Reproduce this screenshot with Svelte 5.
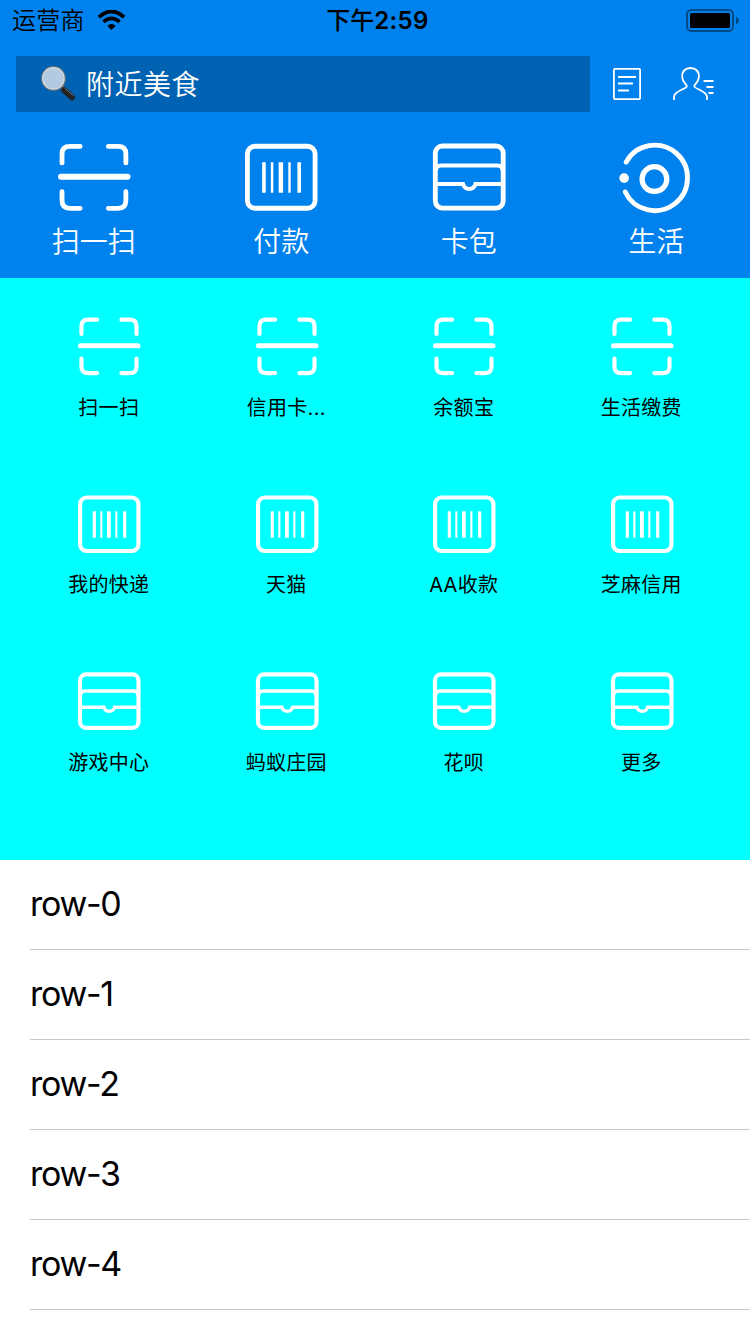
<script>
  const tabs = [
    { icon: 'scan', label: '扫一扫' },
    { icon: 'pay', label: '付款' },
    { icon: 'card', label: '卡包' },
    { icon: 'life', label: '生活' }
  ];
  const apps = [
    { icon: 'scan', labels: ['扫一扫', '信用卡还款', '余额宝', '生活缴费'] },
    { icon: 'pay', labels: ['我的快递', '天猫', 'AA收款', '芝麻信用'] },
    { icon: 'card', labels: ['游戏中心', '蚂蚁庄园', '花呗', '更多'] }
  ];
  const short = (s) => (s.length > 4 ? s.slice(0, 3) + '...' : s);
  const rows = [0, 1, 2, 3, 4];
</script>

{#snippet glyph(name)}
  <svg class="glyph" viewBox="0 0 72 72" fill="none" stroke="#fff" stroke-width="4.8" stroke-linecap="round">
    {#if name === 'scan'}
      <path d="M4 21.8V12.8Q4 5.4 11.8 5.4H22M50 5.4H59.8Q67.4 5.4 67.4 12.8V21.8M4 50.3V59.2Q4 66.9 11.8 66.9H22M50 66.9H59.8Q67.4 66.9 67.4 59.2V50.3" />
      <path d="M3 35.4H69" stroke-width="6" />
    {:else if name === 'pay'}
      <rect x="2.4" y="5.2" width="67.2" height="61.6" rx="7.5" />
      <path d="M17 21h3.6v30.5h-3.6zM25.7 21h2.4v30.5h-2.4zM33.4 21h4.4v30.5h-4.4zM43 21h2.4v30.5H43zM52 21h3.6v30.5h-3.6z" fill="#fff" stroke="none" />
    {:else if name === 'card'}
      <rect x="2.3" y="5" width="67.4" height="61.6" rx="7" />
      <path d="M3 29.4Q3 24.3 8 24.3H64Q69 24.3 69 29.4M3 42.8H29.8C31.5 49.2 40.5 49.2 42.2 42.8H69" stroke-width="4" stroke-linecap="butt" />
    {:else}
      <path d="M6.1 20.9A32.5 32.5 0 1 1 5.2 50.6" />
      <circle cx="34.2" cy="37.8" r="12.3" stroke-width="5.2" />
      <circle cx="4.1" cy="36.8" r="4.8" fill="#fff" stroke="none" />
    {/if}
  </svg>
{/snippet}

<main>
  <header>
    <div class="status">
      <div class="carrier">
        <span>运营商</span>
        <svg width="30" height="22" viewBox="0 0 30 22">
          <path d="M1.8 7.5Q15-4.5 28.2 7.5" fill="none" stroke="#000" stroke-width="4" />
          <path d="M6.5 12.3Q15 5.2 23.5 12.3" fill="none" stroke="#000" stroke-width="3.8" />
          <path d="M10.6 16.6Q15 12.8 19.4 16.6L15 21Z" />
        </svg>
      </div>
      <time><span>下午</span>2:59</time>
      <svg class="battery" width="53" height="24" viewBox="0 0 53 24">
        <rect x="1" y="1" width="46" height="21" rx="4.5" fill="none" stroke="#004a88" stroke-width="2" />
        <rect x="4" y="4" width="40" height="15" rx="1.5" />
        <path d="M50 7.5Q53 9 53 11.5T50 15.5Z" fill="#004a88" />
      </svg>
    </div>
    <div class="tools">
      <div class="search">
        <svg width="38" height="38" viewBox="0 0 38 38">
          <path d="M21 22L26 27" stroke="#858c91" stroke-width="4" />
          <path d="M24 26L32 33.2" stroke="#222" stroke-width="6" stroke-linecap="round" />
          <path d="M25 24.5L33 31.5" stroke="#777" stroke-width="1" stroke-linecap="round" />
          <circle cx="13.4" cy="14.4" r="11.6" fill="#b3cbe2" stroke="#68747c" stroke-width="1.6" />
          <circle cx="13.4" cy="14.4" r="10.8" fill="none" stroke="#d4dbdd" stroke-width="1.1" />
        </svg>
        <span>附近美食</span>
      </div>
      <svg class="bill" width="28" height="34" viewBox="0 0 28 34" fill="none" stroke="#fff" stroke-width="1.8">
        <rect x=".9" y="1.9" width="26.2" height="30.2" rx="1" />
        <path d="M5 10H23M5 16.5H20M5 23.5H16" />
      </svg>
      <svg class="contact" width="42" height="36" viewBox="0 0 42 36" fill="none" stroke="#fff" stroke-width="1.8">
        <path d="M1 34V31C1 28 4 26 8 24Q14 21.5 13.8 20C13.5 18 9.5 17 9.2 11C8.9 5 12.5 2 17.5 2S26.2 5 25.9 11C25.6 17 21.5 18 21.2 20Q21 21.5 27 24C31 26 34 28 34 31V34M30.5 15H40.5M33.5 21H40.5M35.5 27H40.5" />
      </svg>
    </div>
    <nav>
      {#each tabs as t}
        <div class="tab">{@render glyph(t.icon)}<span>{t.label}</span></div>
      {/each}
    </nav>
  </header>
  <section class="apps">
    {#each apps as line}
      {#each line.labels as label}
        <div class="app">{@render glyph(line.icon)}<span>{short(label)}</span></div>
      {/each}
    {/each}
  </section>
  <ul>
    {#each rows as n}
      <li>row-{n}</li>
    {/each}
  </ul>
</main>

<style>
  :global(body) { margin: 0; background: #fff; overflow: hidden; }
  main { width: 750px; height: 1334px; overflow: hidden; background: #fff; font-family: Inter, "Noto Sans CJK SC", sans-serif; }
  header { height: 278px; background: #0082ee; }
  .status { height: 42px; display: grid; grid-template-columns: 1fr auto 1fr; align-items: center; padding: 0 11px 0 12px; color: #000; font-size: 24px; line-height: 42px; }
  .carrier { display: flex; align-items: center; gap: 12px; font-weight: 350; letter-spacing: .3px; }
  .carrier svg { width: 29px; height: 21px; margin-bottom: 2px; }
  time { font-weight: 600; letter-spacing: .4px; padding-left: 4px; }
  time span { font-weight: 500; letter-spacing: 0; }
  .battery { justify-self: end; margin-bottom: 1px; }
  .tools { height: 56px; margin-top: 14px; display: flex; align-items: center; }
  .search { width: 574px; height: 56px; margin-left: 16px; background: #0062b3; display: flex; align-items: center; gap: 8px; padding: 0 0 2px 24px; box-sizing: border-box; color: #fff; font-size: 28px; font-weight: 350; letter-spacing: .5px; }
  .bill { margin-left: 23px; }
  .contact { margin-left: 32px; }
  nav { display: grid; grid-template-columns: repeat(4, 187.5px); padding-top: 29px; }
  .tab, .app { display: flex; flex-direction: column; align-items: center; }
  .glyph { overflow: visible; }
  .tab .glyph { width: 72.5px; height: 72.5px; }
  .tab span { color: #fff; font-size: 28px; font-weight: 350; line-height: 40px; margin-top: 8px; white-space: nowrap; }
  .apps { height: 582px; box-sizing: border-box; padding: 37px 19.5px 0 20.5px; background: #0ff; display: grid; grid-template-columns: repeat(4, 177.5px); grid-auto-rows: 177.5px; }
  .app .glyph { width: 62.5px; height: 62.5px; }
  .app span { font-size: 20px; font-weight: 380; line-height: 28px; letter-spacing: .3px; margin: 16.4px 1px 0 0; color: #000; white-space: nowrap; }
  ul { margin: 0; padding: 0 0 0 30px; list-style: none; }
  li { height: 90px; box-sizing: border-box; border-bottom: 1px solid #c8c7cc; font-size: 34px; font-weight: 380; line-height: 88px; color: #000; letter-spacing: -1.3px; }
</style>
